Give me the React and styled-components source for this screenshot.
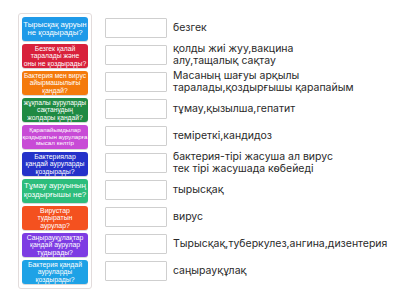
import React from 'react';
import styled, { createGlobalStyle } from 'styled-components';

const GlobalStyle = createGlobalStyle`
  html, body {
    margin: 0;
    padding: 0;
    background: #ffffff;
  }
  body {
    font-family: Inter, "Liberation Sans", sans-serif;
  }
`;

// card text is split by hand, the way the game fits it into the tile
const questions = [
  { lines: ['Тырысқақ ауруын', 'не қоздырады?'], color: '#1f9ae8', size: 7.8 },
  { lines: ['Безгек қалай', 'таралады және', 'оны не қоздырады?'], color: '#d8213b', size: 6.8 },
  { lines: ['Бактерия мен вирус', 'айырмашылығы', 'қандай?'], color: '#f47a0c', size: 6.7 },
  { lines: ['жұқпалы ауруларды', 'сақтанудың', 'жолдары қандай?'], color: '#1f8a43', size: 6.7 },
  { lines: ['Қарапайымдылар', 'қоздыратын ауруларға', 'мысал келтір'], color: '#c84bd6', size: 6.2 },
  { lines: ['Бактериялар', 'қандай ауруларды', 'қоздырады?'], color: '#2431c9', size: 6.9 },
  { lines: ['Тұмау ауруының', 'қоздырғышы не?'], color: '#2dbd7c', size: 8 },
  { lines: ['Вирустар', 'тудыратын', 'аурулар?'], color: '#f4511f', size: 6.9 },
  { lines: ['Саңырауқұлақтар', 'қандай аурулар', 'тудырады?'], color: '#7d3ce3', size: 6.9 },
  { lines: ['Бактерия қандай', 'ауруларды', 'қоздырады?'], color: '#1ea2e6', size: 6.9 },
];

const answers = [
  ['безгек'],
  ['қолды жиі жуу,вакцина', 'алу,тащалық сақтау'],
  ['Масаның шағуы арқылы', 'таралады,қоздырғышы қарапайым'],
  ['тұмау,қызылша,гепатит'],
  ['теміреткі,кандидоз'],
  ['бактерия-тірі жасуша ал вирус', 'тек тірі жасушада көбейеді'],
  ['тырысқақ'],
  ['вирус'],
  ['Тырысқақ,туберкулез,ангина,дизентерия'],
  ['саңырауқұлақ'],
];

const Page = styled.div`
  display: flex;
  align-items: flex-start;
  gap: 13px;
  padding: 13px 0 0 18px;
  width: 400px;
  height: 300px;
  box-sizing: border-box;
  overflow: hidden;
`;

const CardPanel = styled.div`
  display: flex;
  flex-direction: column;
  gap: 3px;
  width: 74px;
  padding: 3px 3px 4px;
  box-sizing: border-box;
  border: 1px solid #e2dcdc;
  border-radius: 3px;
  background: #ffffff;
`;

const Card = styled.div`
  height: 24px;
  display: flex;
  flex-direction: column;
  align-items: center;
  justify-content: center;
  border-radius: 3px;
  background: ${(p) => p.$bg};
  color: #ffffff;
  font-family: "Liberation Sans", Arial, sans-serif;
  font-size: ${(p) => p.$size}px;
  line-height: 1.08;
  text-align: center;
  white-space: nowrap;
  overflow: hidden;
  box-shadow: 0 1px 0 rgba(0, 0, 0, 0.15);
`;

const Answers = styled.div`
  display: flex;
  flex-direction: column;
  gap: 7px;
  padding-top: 5px;
`;

const Row = styled.div`
  display: flex;
  align-items: center;
  gap: 6px;
  height: 20px;
`;

const Slot = styled.div`
  width: 62px;
  height: 20px;
  flex-shrink: 0;
  box-sizing: border-box;
  border: 1px solid #cfcfcf;
  border-radius: 1px;
  background: #ffffff;
`;

const Label = styled.div`
  font-size: 10.5px;
  line-height: 12px;
  color: #2a2a2a;
  white-space: nowrap;
`;

export default function App() {
  return (
    <>
      <GlobalStyle />
      <Page>
        <CardPanel>
          {questions.map((q, i) => (
            <Card key={i} $bg={q.color} $size={q.size}>
              {q.lines.map((line, j) => (
                <span key={j}>{line}</span>
              ))}
            </Card>
          ))}
        </CardPanel>
        <Answers>
          {answers.map((lines, i) => (
            <Row key={i}>
              <Slot />
              <Label>
                {lines.map((line, j) => (
                  <div key={j}>{line}</div>
                ))}
              </Label>
            </Row>
          ))}
        </Answers>
      </Page>
    </>
  );
}
